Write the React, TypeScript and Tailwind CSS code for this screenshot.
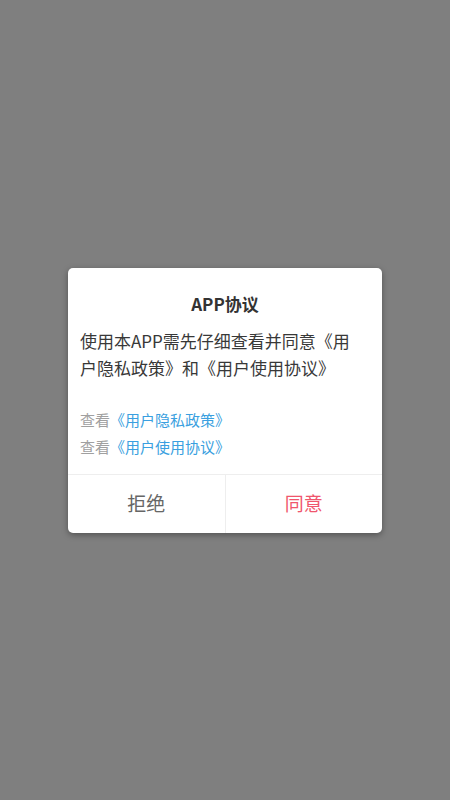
export default function App() {
  return (
    <main
      className="flex h-[800px] w-full items-center justify-center bg-[#7f7f7f]"
      style={{ fontFamily: '"Noto Sans CJK SC", "Noto Sans", sans-serif' }}
    >
      <div className="w-[314px] overflow-hidden rounded-[5px] bg-white shadow-[0_2px_6px_rgba(0,0,0,0.35)]">
        <div className="pt-[24px] pr-[24px] pb-[14px] pl-3">
          <h2 className="pl-3 text-center text-[17px] leading-[24px] font-bold text-[#333]">APP协议</h2>
          <p className="mt-[11px] text-[17px] leading-[27px] text-[#383838]">
            使用本APP需先仔细查看并同意《用户隐私政策》和《用户使用协议》
          </p>
          <div className="mt-[25px] text-[15px] leading-[27px]">
            <p>
              <span className="text-[#a0a0a0]">查看</span>
              <span className="text-[#3a9fe0]">《用户隐私政策》</span>
            </p>
            <p>
              <span className="text-[#a0a0a0]">查看</span>
              <span className="text-[#3a9fe0]">《用户使用协议》</span>
            </p>
          </div>
        </div>
        <div className="flex h-[59px] border-t border-[#eeeeee]">
          <button className="flex-1 border-r border-[#eeeeee] text-[19px] text-[#666]">拒绝</button>
          <button className="flex-1 text-[19px] text-[#f0566d]">同意</button>
        </div>
      </div>
    </main>
  );
}
